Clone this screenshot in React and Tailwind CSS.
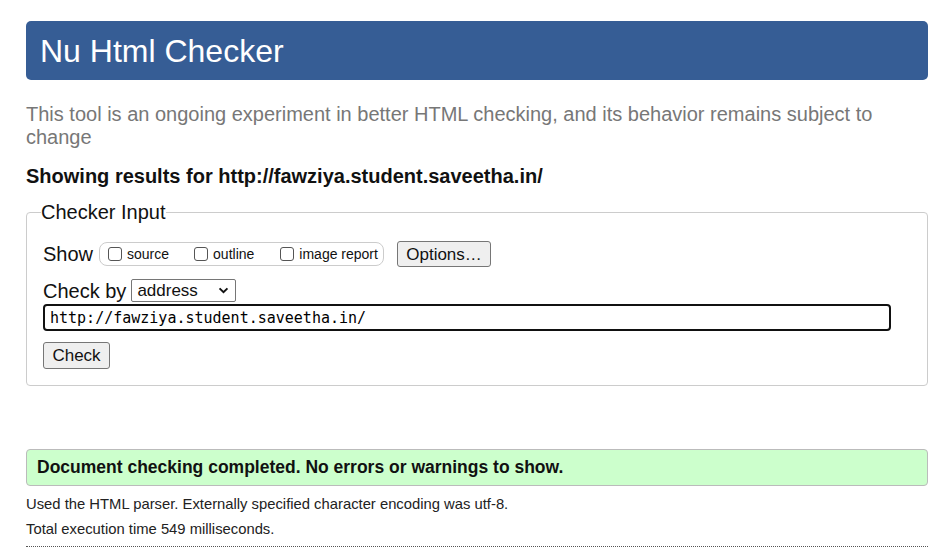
import { useState } from "react";

const URL = "http://fawziya.student.saveetha.in/";

function Box({ label }) {
  return (
    <label className="flex items-center">
      <span className="w-[14px] h-[14px] border border-[#555] rounded-[3px] bg-white ml-[8px] mr-[5px]" />
      <span className="text-[14px] leading-none">{label}</span>
    </label>
  );
}

export default function App() {
  const [addr, setAddr] = useState(URL);

  return (
    <div className="font-['Liberation_Sans',Arial,sans-serif] text-[#111] bg-white w-[952px] h-[560px] overflow-hidden">
      <div className="ml-[26px] w-[902px] pt-[21px]">
        {/* HEADER */}
        <div className="bg-[#365d95] rounded-[5px] h-[59px] flex items-center px-[14px]">
          <h1 className="text-white text-[32px] leading-none">Nu Html Checker</h1>
        </div>

        <p className="text-[#777] text-[20px] leading-[23px] mt-[23px]">
          This tool is an ongoing experiment in better HTML checking, and its behavior remains subject to
          change
        </p>

        <p className="font-bold text-[20px] leading-[23px] mt-[16px]">Showing results for {URL}</p>

        {/* CHECKER INPUT */}
        <fieldset className="mt-[13px] border border-[#ccc] rounded-[4px] px-[16px] h-[185px]">
          <legend className="text-[20px] ml-[-2px] leading-[22px]">Checker Input</legend>

          <div className="flex items-center h-[26px] mt-[18px]">
            <span className="text-[20px] leading-none mr-[6px]">Show</span>
            <div className="flex items-center h-[24px] border border-[#ccc] rounded-[8px] w-[285px]">
              <Box label="source" />
              <span className="w-[17px]" />
              <Box label="outline" />
              <span className="w-[18px]" />
              <Box label="image report" />
            </div>
            <button className="ml-[13px] h-[26px] w-[94px] text-[17px] leading-none bg-[#efefef] border border-[#767676] rounded-[3px]">
              Options…
            </button>
          </div>

          <div className="flex items-center h-[23px] mt-[12px]">
            <span className="text-[20px] leading-none mr-[5px]">Check by</span>
            <div className="flex items-center justify-between w-[105px] h-[23px] border border-[#767676] rounded-[2px] pl-[5px] pr-[6px] text-[17px] leading-none">
              address
              <svg width="11" height="7" viewBox="0 0 12 8" fill="none" stroke="#111" strokeWidth="2.2">
                <path d="M1.5 1.5 L6 6 L10.5 1.5" />
              </svg>
            </div>
          </div>

          <input
            value={addr}
            onChange={(e) => setAddr(e.target.value)}
            className="block mt-[2px] w-[848px] h-[27px] border-2 border-[#111] rounded-[4px] px-[5px] font-['DejaVu_Sans_Mono',monospace] text-[15px] text-black outline-none"
          />

          <button className="mt-[11px] h-[27px] w-[67px] text-[17px] leading-none bg-[#efefef] border border-[#767676] rounded-[3px]">
            Check
          </button>
        </fieldset>

        {/* RESULT */}
        <div className="mt-[63px] h-[37px] bg-[#ccffcc] border border-[#bbb] rounded-[4px] flex items-center px-[10px]">
          <span className="font-bold text-[17.5px]">Document checking completed. No errors or warnings to show.</span>
        </div>

        <p className="text-[14.8px] text-[#222] mt-[10px] leading-[16px]">
          Used the HTML parser. Externally specified character encoding was utf-8.
        </p>
        <p className="text-[14.8px] text-[#222] mt-[9px] leading-[16px]">Total execution time 549 milliseconds.</p>
        <div className="mt-[9px] border-t border-dotted border-[#555]" />
      </div>
    </div>
  );
}
